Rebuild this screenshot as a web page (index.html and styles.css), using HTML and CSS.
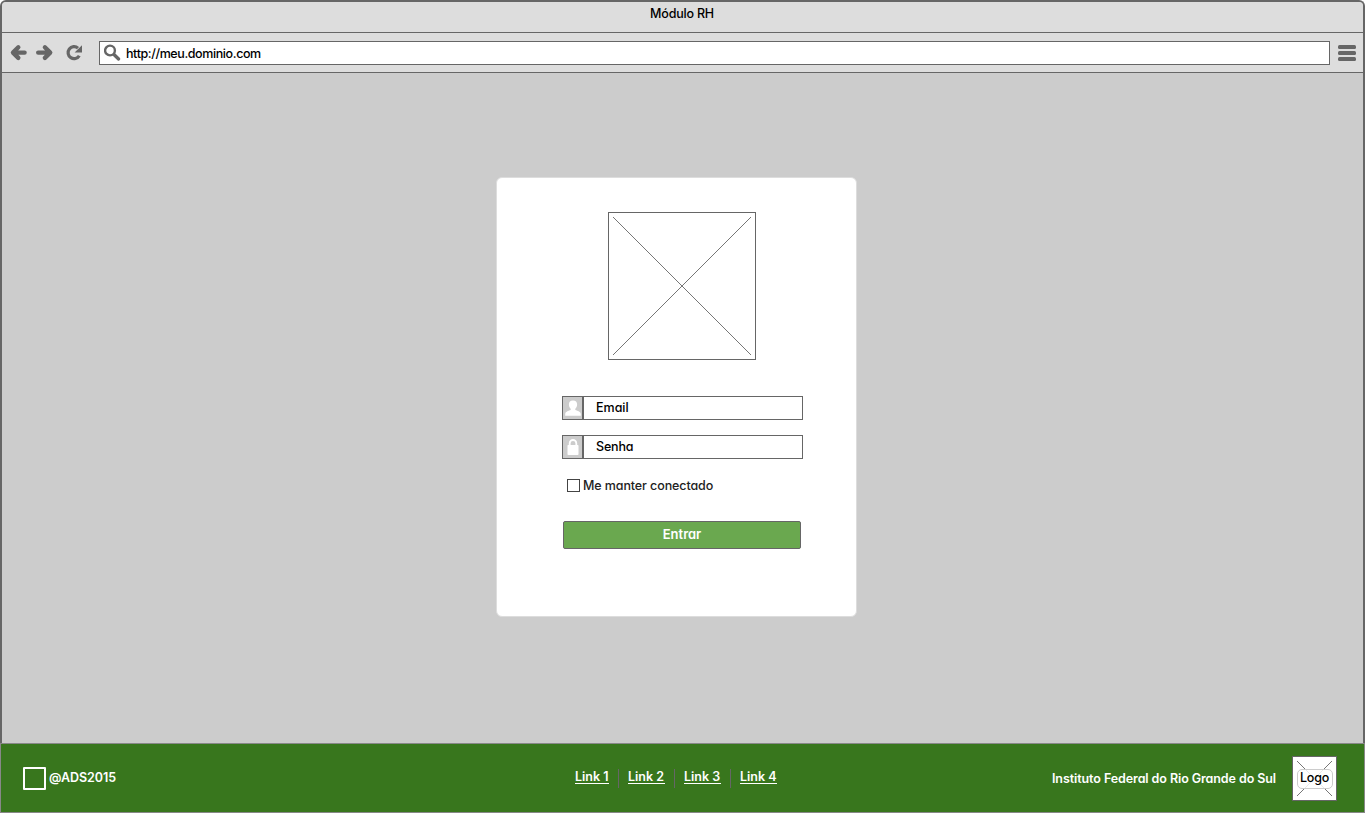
FILE: index.html
```html
<!DOCTYPE html>
<html lang="pt-BR">
<head>
<meta charset="utf-8">
<title>Módulo RH</title>
<link rel="stylesheet" href="styles.css">
</head>
<body>
<div class="window">
  <header class="titlebar"><span class="title">Módulo RH</span></header>
  <nav class="toolbar">
    <svg class="nav-icons" width="80" height="20" viewBox="0 0 80 20">
      <g fill="none" stroke="#666" stroke-width="4.400" stroke-linecap="round" stroke-linejoin="round">
        <path d="M9.300 4.300 4 9.600l5.300 5.300M5 9.600h10.600"/>
        <path d="M35.900 4.300 41.200 9.600l-5.300 5.300M40.200 9.600H29.200"/>
      </g>
      <path d="M70.300 12.700A6 6 0 1 1 69 5.100" fill="none" stroke="#666" stroke-width="3.200"/>
      <path d="M73 2.300v7.200h-7.400z" fill="#666"/>
    </svg>
    <div class="address">
      <svg width="18" height="18" viewBox="0 0 18 18" fill="none" stroke="#666">
        <circle cx="6" cy="6.500" r="4.900" stroke-width="2.400"/>
        <path d="m10.200 10.700 4.400 4.200" stroke-width="3.400" stroke-linecap="round"/>
      </svg>
      <span class="url">http://meu.dominio.com</span>
    </div>
    <svg class="menu" width="18" height="16" viewBox="0 0 18 16" fill="#666">
      <rect width="18" height="4" rx="1.500"/><rect y="6" width="18" height="4" rx="1.500"/><rect y="12" width="18" height="4" rx="1.500"/>
    </svg>
  </nav>
  <main class="content">
    <form class="card">
      <svg class="placeholder" width="148" height="148" viewBox="0 0 148 148" fill="none" stroke="#666">
        <rect x=".5" y=".5" width="147" height="147"/>
        <path d="m5 5 138 138M143 5 5 143" stroke-width=".9"/>
      </svg>
      <div class="field">
        <span class="field-icon"><svg width="19" height="22" viewBox="0 0 19 22" fill="#fff"><path d="M10 3.500c2.700 0 4.100 1.600 4.100 4 0 2-.8 3.400-1.800 4.300v1.300c2.400.9 5.500 1.600 5.500 4.200v1.500H2.200v-1.500c0-2.600 3.100-3.300 5.500-4.200v-1.300C6.700 10.900 5.900 9.500 5.900 7.500c0-2.400 1.400-4 4.100-4z"/></svg></span>
        <span class="field-box"><span class="email">Email</span></span>
      </div>
      <div class="field">
        <span class="field-icon"><svg width="19" height="22" viewBox="0 0 19 22"><path d="M6.700 10V7.300a3.300 3.300 0 0 1 6.600 0V10" fill="none" stroke="#fff" stroke-width="1.800"/><rect x="4.500" y="9" width="11" height="10" rx=".8" fill="#fff"/></svg></span>
        <span class="field-box"><span class="senha">Senha</span></span>
      </div>
      <label class="remember"><span class="check"></span><span class="remember-text">Me manter conectado</span></label>
      <div class="submit"><span class="entrar">Entrar</span></div>
    </form>
  </main>
</div>
<footer class="footer">
  <div class="copyright"><span class="mark"></span><span class="ads">@ADS2015</span></div>
  <div class="links">
    <a class="link">Link 1</a><a class="link">Link 2</a><a class="link">Link 3</a><a class="link">Link 4</a>
  </div>
  <div class="owner">
    <span class="institute">Instituto Federal do Rio Grande do Sul</span>
    <div class="logo">
      <svg class="cross" width="45" height="45" viewBox="0 0 45 45" fill="none" stroke="#666"><rect x=".5" y=".5" width="44" height="44" fill="#fff"/><path d="m5 5 35 35M40 5 5 40" stroke-width=".9"/></svg>
      <span class="logo-label"><span class="logo-text">Logo</span></span>
    </div>
  </div>
</footer>
</body>
</html>
```
FILE: styles.css
```css
* { box-sizing: border-box; }
body {
  margin: 0;
  width: 1365px;
  height: 813px;
  overflow: hidden;
  background: #fff;
  color: #000;
  font: 500 12.5px/16px Inter, "Open Sans", sans-serif;
  font-feature-settings: "cv11" 1;
}
svg { display: block; flex: none; }
span, a { white-space: nowrap; }
.window {
  display: flex;
  flex-direction: column;
  height: 743px;
  border: 2px solid #666;
  border-bottom: 0;
  border-radius: 6px 6px 0 0;
  background: #ccc;
  overflow: hidden;
}
.titlebar {
  display: flex;
  justify-content: center;
  height: 31px;
  padding: 4px 1px 0 0;
  border-bottom: 1px solid #666;
  background: #ddd;
}
.title { letter-spacing: -.2px; }
.toolbar {
  display: flex;
  align-items: center;
  height: 40px;
  padding: 0 7px;
  border-bottom: 1px solid #666;
  background: #ddd;
}
.nav-icons { margin-right: 10px; }
.address {
  display: flex;
  align-items: center;
  width: 1231px;
  height: 24px;
  padding-left: 4px;
  border: 1px solid #666;
  background: #fff;
}
.url { margin-left: 4px; padding-top: 2px; letter-spacing: -.4px; }
.menu { margin-left: 8px; }
.content { flex: 1; padding: 104px 0 0 494px; }
.card {
  display: flex;
  flex-direction: column;
  width: 361px;
  height: 440px;
  padding: 34px 0 0 65px;
  border: 1px solid #ddd;
  border-radius: 6px;
  background: #fff;
}
.placeholder { margin: 0 0 36px 46px; }
.field { display: flex; width: 241px; height: 24px; margin-bottom: 15px; }
.field-icon { width: 21px; border: 1px solid #666; background: #ccc; }
.field-box { flex: 1; padding: 3px 0 0 12px; border: 1px solid #666; }
.senha { letter-spacing: -.15px; }
.remember { display: flex; align-items: center; height: 16px; margin: 3px 0 0 5px; color: #222; }
.remember-text { padding-top: 2px; letter-spacing: -.1px; }
.check { width: 13px; height: 13px; margin-right: 3px; border: 1px solid #444; }
.submit {
  display: flex;
  justify-content: center;
  width: 238px;
  height: 28px;
  margin: 28px 0 0 1px;
  padding-top: 4px;
  border: 1px solid #666;
  border-radius: 2px;
  background: #6aa84f;
  color: #fff;
  font-size: 13px;
  font-weight: 600;
}
.footer {
  display: grid;
  grid-template-columns: 552px 1fr 312px;
  align-items: start;
  height: 70px;
  padding: 0 0 0 22px;
  border: 1px solid #888;
  background: #38761d;
  color: #fff;
  font-weight: 600;
}
.copyright { display: flex; align-items: center; padding-top: 23px; }
.mark { width: 23px; height: 23px; margin-right: 3px; border: 2px solid #fff; border-radius: 1px; }
.ads { padding-bottom: 2px; letter-spacing: -.05px; }
.links { display: flex; padding-top: 25px; }
.link { width: 37px; height: 15px; border-bottom: 1px solid #fff; }
.link:first-child { width: 34px; }
.link + .link { margin-left: 19px; position: relative; }
.link + .link::before {
  content: "";
  position: absolute;
  left: -10px;
  top: 0;
  width: 1px;
  height: 19px;
  background: #666;
}
.owner { display: flex; align-items: center; padding-top: 12px; }
.institute { width: 240px; padding-top: 1px; letter-spacing: -.09px; }
.logo { position: relative; width: 45px; height: 45px; }
.logo-label {
  position: absolute;
  left: 5px;
  top: 13px;
  width: 36px;
  height: 20px;
  padding-right: 1px;
  border: 1px solid #ccc;
  border-radius: 5px;
  background: rgba(255, 255, 255, .85);
  color: #000;
  font-weight: 500;
  text-align: center;
}
.logo-text { letter-spacing: -.2px; }
```
